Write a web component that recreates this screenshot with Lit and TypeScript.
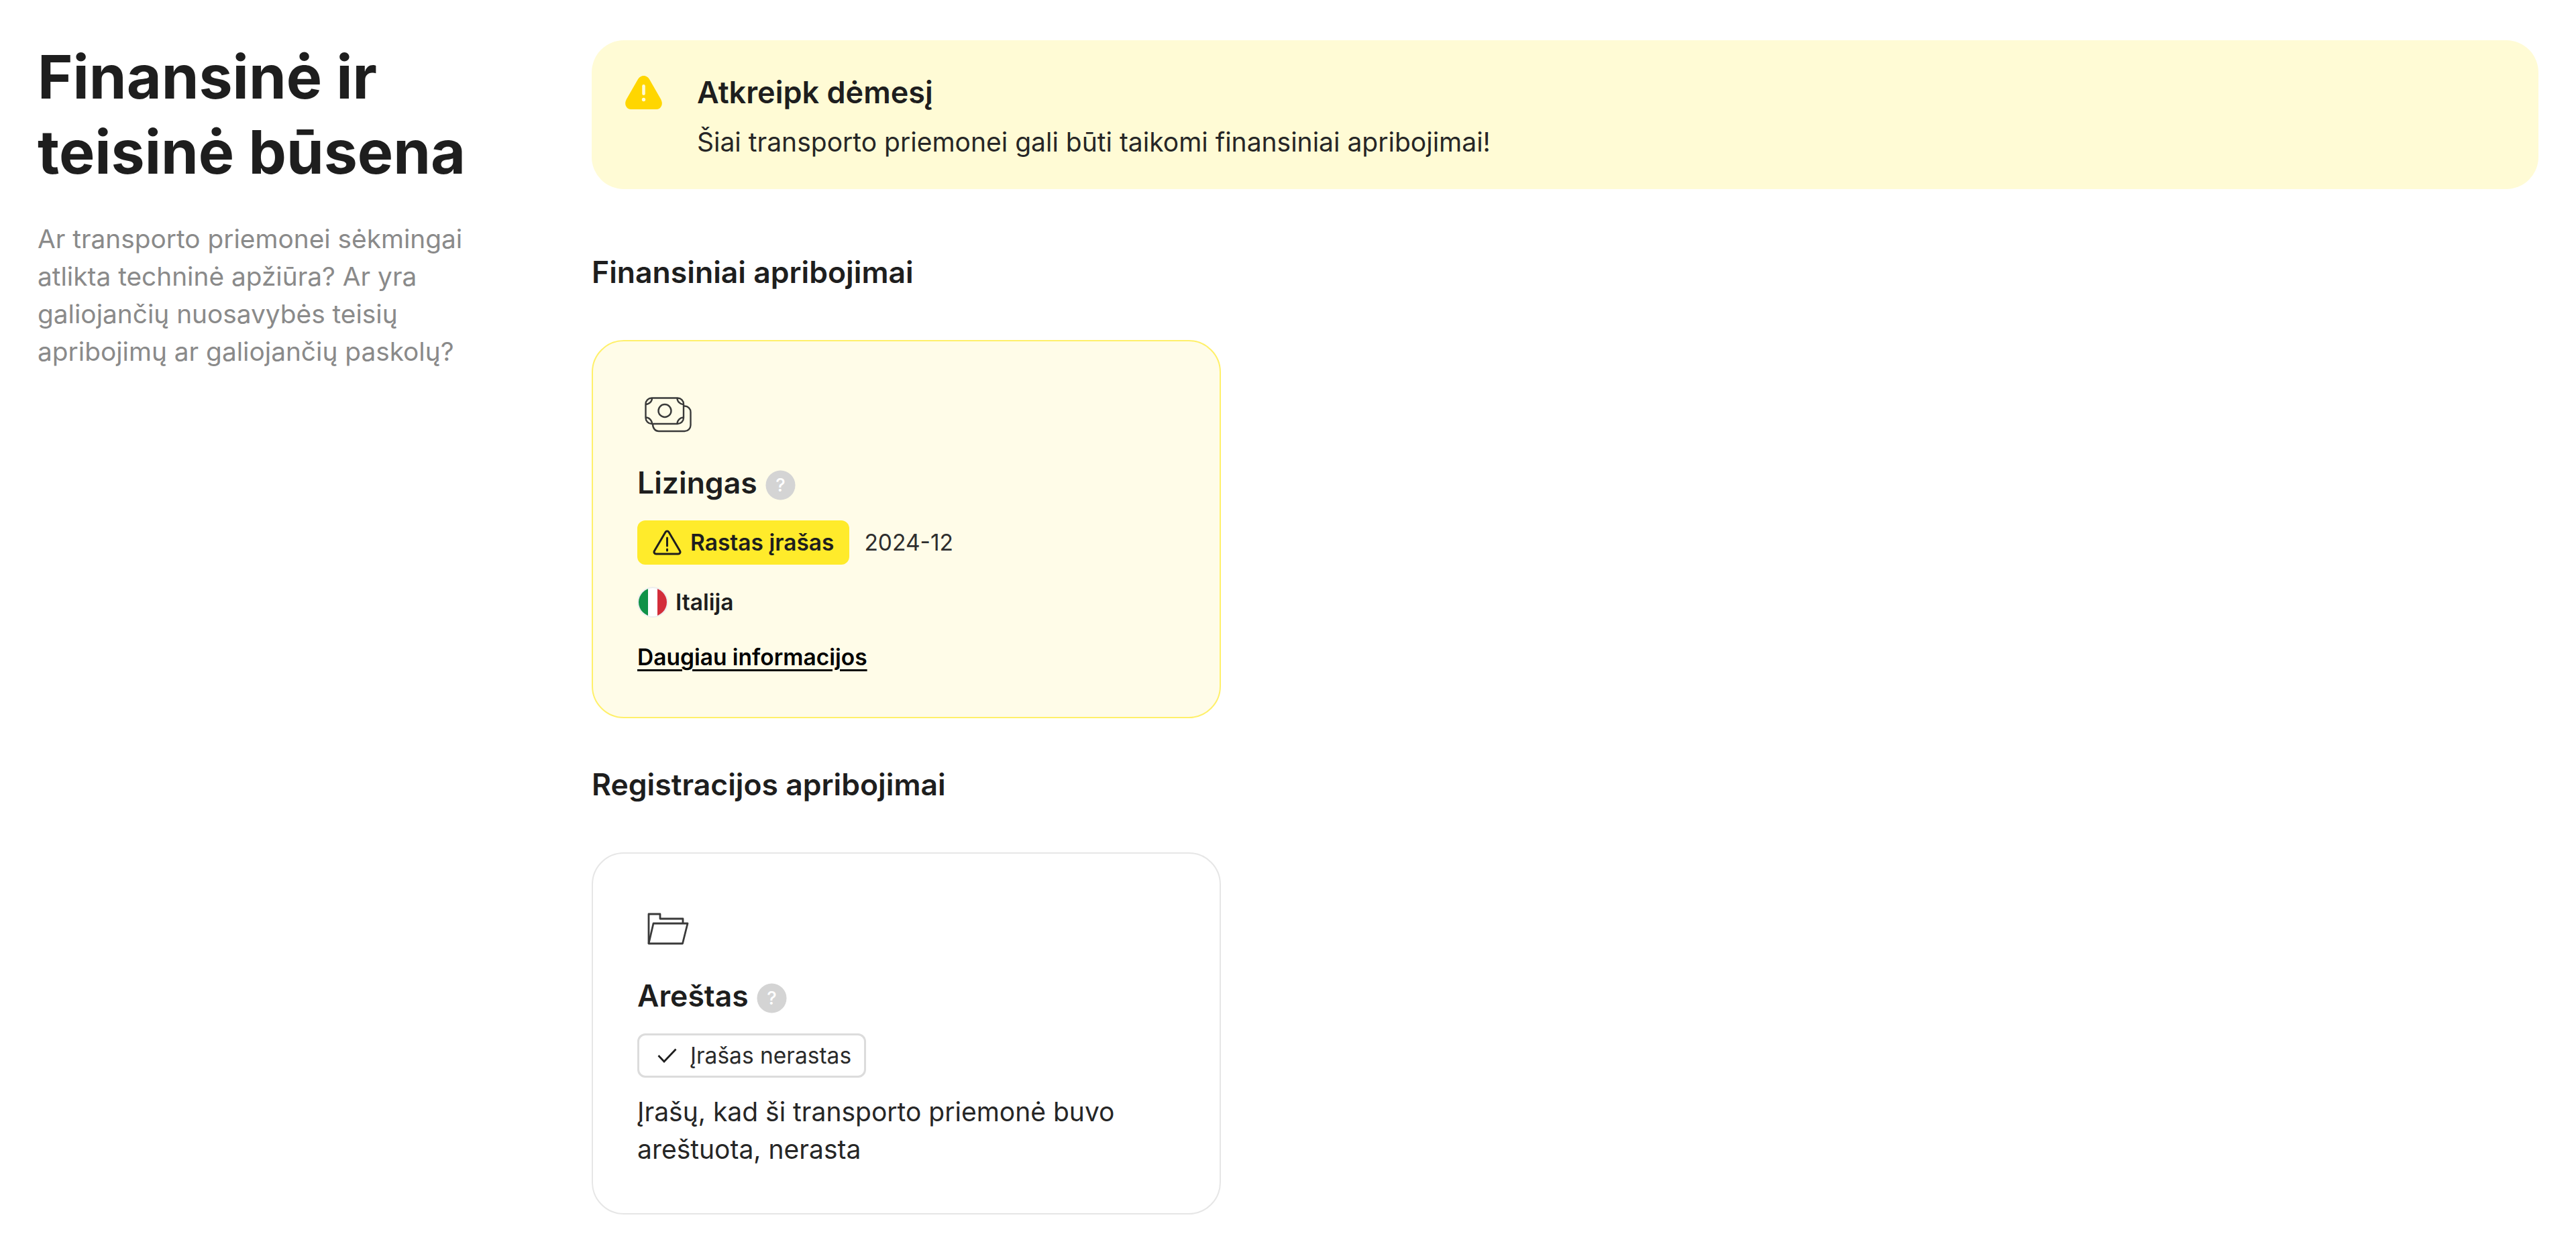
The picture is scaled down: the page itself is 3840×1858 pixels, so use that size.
import { LitElement, html, css } from "lit";
import { customElement } from "lit/decorators.js";

const help = html`<svg class="help" viewBox="0 0 46 46"><circle cx="23" cy="23" r="22.500" fill="#d4d4d4"/><text x="23" y="33" text-anchor="middle" font-size="28" font-weight="500" fill="#fff" font-family="Inter">?</text></svg>`;

@customElement("app-root")
export class AppRoot extends LitElement {
  static styles = css`
    :host { display: block; background: #fff; color: #1e1e1e; font-family: Inter, "Noto Sans", sans-serif; min-height: 1858px; }
    .page { display: grid; grid-template-columns: 826px 1fr; padding: 60px 56px 46px; box-sizing: border-box; }
    h1 { margin: -1px 0 0; font-size: 89.600px; line-height: 112px; font-weight: 700; color: #1e1e1e; width: 700px; }
    .lede { margin: 45px 0 0; font-size: 38.800px; line-height: 56px; color: #8a8a8a; width: 680px; }
    .main { display: flex; flex-direction: column; min-width: 0; }
    .alert { display: flex; gap: 51px; height: 222px; box-sizing: border-box; padding: 50px 50px; background: #fffbd5; border-radius: 48px; }
    .alert svg { width: 56px; height: 50px; flex: none; margin-top: 3px; }
    .alert b { display: block; font-size: 45px; line-height: 56px; font-weight: 600; }
    .alert p { margin: 18px 0 0; font-size: 39px; line-height: 56px; color: #262626; }
    h2 { margin: 0; font-size: 44.500px; line-height: 56px; font-weight: 600; }
    .h-first { margin-top: 96px; }
    .h-second { margin-top: 71px; }
    .card { width: 938px; box-sizing: border-box; border-radius: 48px; border: 2px solid #e6e6e6; padding: 63px 66px 0; margin-top: 73px; }
    .card.warn { height: 564px; background: #fffce8; border-color: #fff06a; }
    .card.plain { height: 540px; background: #fff; }
    .ico { display: block; width: 92px; height: 92px; }
    .name { display: flex; align-items: center; gap: 12px; font-size: 44.500px; line-height: 56px; font-weight: 600; margin-top: 28px; }
    .plain .name { margin-top: 29px; }
    .help { width: 45px; height: 45px; flex: none; margin-top: 6px; }
    .row { display: flex; align-items: center; gap: 22px; margin-top: 28px; }
    .tag { display: inline-flex; align-items: center; height: 66px; box-sizing: border-box; border-radius: 12px; font-size: 33.500px; }
    .tag svg { flex: none; }
    .tag.found { background: #ffeb2b; font-weight: 600; padding: 0 23px; gap: 13px; }
    .tag.none { border: 3px solid #dcdcdc; background: #fff; padding: 0 19px 0 27px; gap: 20px; color: #2a2a2a; }
    .date { font-size: 33.500px; color: #2e2e2e; }
    .country { display: flex; align-items: center; gap: 11px; font-size: 33.500px; font-weight: 600; margin-top: 32px; line-height: 48px; }
    .flag { width: 46px; height: 46px; flex: none; }
    a { display: inline-block; margin-top: 34px; font-size: 33.500px; line-height: 48px; font-weight: 600; color: #000; text-decoration: underline; text-decoration-thickness: 3px; text-underline-offset: 6px; }
    .desc { margin: 23px 0 0; font-size: 39px; line-height: 56px; color: #262626; }
  `;

  render() {
    return html`<div class="page">
      <aside>
        <h1>Finansinė ir teisinė būsena</h1>
        <p class="lede">Ar transporto priemonei sėkmingai atlikta techninė apžiūra? Ar yra galiojančių nuosavybės teisių apribojimų ar galiojančių paskolų?</p>
      </aside>
      <main class="main">
        <div class="alert">
          <svg viewBox="0 0 56 50"><path d="M27.500 0c4 0 7 2.500 9 6L52 33c3 5 3.500 8.500 2 12-1.200 3-4 5-8 5H9c-4 0-6.800-2-8-5-1.500-3.500-1-7 2-12L18.500 6c2-3.500 5-6 9-6z" fill="#ffd600"/><rect x="25.200" y="13" width="4.600" height="16" rx="2.300" fill="#fffbd5"/><circle cx="27.500" cy="35.500" r="2.700" fill="#fffbd5"/></svg>
          <div><b>Atkreipk dėmesį</b><p>Šiai transporto priemonei gali būti taikomi finansiniai apribojimai!</p></div>
        </div>
        <h2 class="h-first">Finansiniai apribojimai</h2>
        <section class="card warn">
          <svg class="ico" viewBox="0 0 92 92" fill="none" stroke="#3a3a3a" stroke-width="2.400"><rect x="12.500" y="21.500" width="56.500" height="38.500" rx="9"/><circle cx="41" cy="40.500" r="9.500"/><path d="M12.500 31a9.500 9.500 0 0 0 9.500-9.500M59.500 21.500a9.500 9.500 0 0 0 9.500 9.500M69 50.500a9.500 9.500 0 0 0-9.500 9.500M22 60a9.500 9.500 0 0 0-9.500-9.500"/><path d="M69 33.500h1.500c5 0 9 4 9 9V62c0 5-4 9-9 9H32c-5 0-9-4-9-11"/></svg>
          <div class="name">Lizingas ${help}</div>
          <div class="row">
            <span class="tag found"><svg width="43" height="38" viewBox="0 0 43 38" fill="none" stroke="#1e1e1e" stroke-width="3" stroke-linejoin="round"><path d="M19 3.500c1.200-2 3.800-2 5 0l16.500 28c1.200 2 0 4.500-2.500 4.500H5c-2.500 0-3.700-2.500-2.500-4.500z"/><path d="M21.500 12v12M21.500 29v2" stroke-linecap="round"/></svg>Rastas įrašas</span>
            <span class="date">2024-12</span>
          </div>
          <div class="country"><svg class="flag" viewBox="0 0 46 46"><defs><clipPath id="f"><circle cx="23" cy="23" r="21"/></clipPath></defs><circle cx="23" cy="23" r="23" fill="#eee"/><g clip-path="url(#f)"><rect width="16" height="46" fill="#0f9247"/><rect x="16" width="14" height="46" fill="#fff"/><rect x="30" width="16" height="46" fill="#d32d3a"/></g></svg>Italija</div>
          <a href="#">Daugiau informacijos</a>
        </section>
        <h2 class="h-second">Registracijos apribojimai</h2>
        <section class="card plain">
          <svg class="ico" viewBox="0 0 92 92" fill="none" stroke="#3a3a3a" stroke-width="2.800" stroke-linejoin="round"><path d="M17 71V27h17v7h34v7"/><path d="M24 41h51l-7.500 30H17z"/></svg>
          <div class="name">Areštas ${help}</div>
          <div class="row"><span class="tag none"><svg width="29" height="22" viewBox="0 0 29 22" fill="none" stroke="#1e1e1e" stroke-width="2.800"><path d="M1.500 11l8.500 9L27.500 1.500"/></svg>Įrašas nerastas</span></div>
          <p class="desc">Įrašų, kad ši transporto priemonė buvo areštuota, nerasta</p>
        </section>
      </main>
    </div>`;
  }
}
